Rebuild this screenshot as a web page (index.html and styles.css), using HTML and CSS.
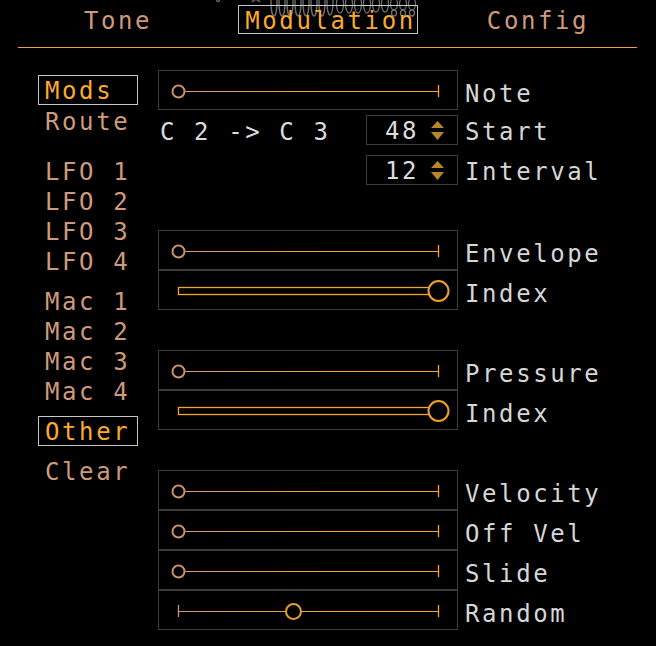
FILE: index.html
```html
<!DOCTYPE html>
<html>
<head>
<meta charset="utf-8">
<link rel="stylesheet" href="styles.css">
</head>
<body>
<div class="app">
  <svg class="logo" width="240" height="20" viewBox="0 0 240 20">
    <g fill="none" stroke="#6e6e6e" stroke-width="1.3">
      <circle cx="18" cy="0" r="1.5"/>
      <path d="M52 2 q4 -5 8 0"/>
      <ellipse cx="74" cy="2" rx="3" ry="14"/>
      <ellipse cx="82" cy="2" rx="3" ry="14"/>
      <ellipse cx="90" cy="2" rx="3" ry="14"/>
      <ellipse cx="98" cy="2" rx="3" ry="14"/>
      <ellipse cx="106" cy="2" rx="3" ry="14"/>
      <ellipse cx="114" cy="2" rx="3" ry="14"/>
      <ellipse cx="122" cy="2" rx="3" ry="14"/>
      <ellipse cx="130" cy="2" rx="3" ry="13"/>
      <ellipse cx="140" cy="4" rx="3.5" ry="9"/>
      <ellipse cx="149" cy="4" rx="3.5" ry="9"/>
      <ellipse cx="158" cy="4" rx="3.5" ry="9"/>
      <ellipse cx="167" cy="4" rx="3.5" ry="9"/>
      <ellipse cx="176" cy="4" rx="3.5" ry="8"/>
      <ellipse cx="185" cy="4" rx="3.5" ry="8"/>
      <ellipse cx="194" cy="4" rx="3.5" ry="6"/>
      <ellipse cx="194" cy="13" rx="2.5" ry="3"/>
      <ellipse cx="203" cy="4" rx="3.5" ry="6"/>
      <ellipse cx="203" cy="13" rx="2.5" ry="3"/>
      <ellipse cx="212" cy="4" rx="3.5" ry="6"/>
      <ellipse cx="212" cy="13" rx="2.5" ry="3"/>
    </g>
  </svg>

  <nav class="tabs">
    <div class="tab"><span class="tab-label">Tone</span></div>
    <div class="tab"><span class="tab-label tab-active">Modulation</span></div>
    <div class="tab"><span class="tab-label">Config</span></div>
  </nav>
  <div class="rule"></div>

  <div class="main">
    <div class="menu">
      <div class="item selected">Mods</div>
      <div class="item gap1">Route</div>
      <div class="item gap20">LFO 1</div>
      <div class="item">LFO 2</div>
      <div class="item">LFO 3</div>
      <div class="item">LFO 4</div>
      <div class="item gap10">Mac 1</div>
      <div class="item">Mac 2</div>
      <div class="item">Mac 3</div>
      <div class="item">Mac 4</div>
      <div class="item selected gap10">Other</div>
      <div class="item gap10">Clear</div>
    </div>

    <div class="panel">
      <div class="row">
        <div class="slider">
          <svg width="298" height="38" viewBox="0 0 298 38">
            <defs>
              <linearGradient id="g" x1="0" y1="0" x2="298" y2="0" gradientUnits="userSpaceOnUse">
                <stop offset="0" stop-color="#c8947a"/>
                <stop offset="0.45" stop-color="#f3a22e"/>
                <stop offset="1" stop-color="#fba526"/>
              </linearGradient>
            </defs>
            <line x1="25" y1="20.5" x2="280" y2="20.5" stroke="url(#g)" stroke-width="1.2"/>
            <line x1="279.5" y1="14" x2="279.5" y2="26" stroke="#f5a32a" stroke-width="1.3"/>
            <circle cx="19.5" cy="20.5" r="6" fill="#000" stroke="#c8906e" stroke-width="2"/>
          </svg>
        </div>
        <div class="label">Note</div>
      </div>

      <div class="row spin-row first-spin">
        <div class="range">C 2 -&gt; C 3</div>
        <div class="spin">
          <span class="num">48</span>
          <svg class="arrows" width="13" height="20" viewBox="0 0 13 20">
            <polygon points="6.5,0 13,7 0,7" fill="#b8862a"/>
            <polygon points="0,11 13,11 6.5,19" fill="#b8862a"/>
          </svg>
        </div>
        <div class="label spin-label">Start</div>
      </div>

      <div class="row spin-row second-spin">
        <div class="range"></div>
        <div class="spin">
          <span class="num">12</span>
          <svg class="arrows" width="13" height="20" viewBox="0 0 13 20">
            <polygon points="6.5,0 13,7 0,7" fill="#b8862a"/>
            <polygon points="0,11 13,11 6.5,19" fill="#b8862a"/>
          </svg>
        </div>
        <div class="label spin-label">Interval</div>
      </div>

      <div class="row group-env">
        <div class="slider">
          <svg width="298" height="38" viewBox="0 0 298 38">
            <line x1="25" y1="20.5" x2="280" y2="20.5" stroke="url(#g)" stroke-width="1.2"/>
            <line x1="279.5" y1="14" x2="279.5" y2="26" stroke="#f5a32a" stroke-width="1.3"/>
            <circle cx="19.5" cy="20.5" r="6" fill="#000" stroke="#c8906e" stroke-width="2"/>
          </svg>
        </div>
        <div class="label">Envelope</div>
      </div>
      <div class="row">
        <div class="slider">
          <svg width="298" height="38" viewBox="0 0 298 38">
            <rect x="19.5" y="16.5" width="258" height="7" fill="none" stroke="#f5a32a" stroke-width="1.3"/>
            <circle cx="279.5" cy="20" r="10" fill="#000" stroke="#f0a024" stroke-width="2"/>
          </svg>
        </div>
        <div class="label">Index</div>
      </div>

      <div class="row group">
        <div class="slider">
          <svg width="298" height="38" viewBox="0 0 298 38">
            <line x1="25" y1="20.5" x2="280" y2="20.5" stroke="url(#g)" stroke-width="1.2"/>
            <line x1="279.5" y1="14" x2="279.5" y2="26" stroke="#f5a32a" stroke-width="1.3"/>
            <circle cx="19.5" cy="20.5" r="6" fill="#000" stroke="#c8906e" stroke-width="2"/>
          </svg>
        </div>
        <div class="label">Pressure</div>
      </div>
      <div class="row">
        <div class="slider">
          <svg width="298" height="38" viewBox="0 0 298 38">
            <rect x="19.5" y="16.5" width="258" height="7" fill="none" stroke="#f5a32a" stroke-width="1.3"/>
            <circle cx="279.5" cy="20" r="10" fill="#000" stroke="#f0a024" stroke-width="2"/>
          </svg>
        </div>
        <div class="label">Index</div>
      </div>

      <div class="row group">
        <div class="slider">
          <svg width="298" height="38" viewBox="0 0 298 38">
            <line x1="25" y1="20.5" x2="280" y2="20.5" stroke="url(#g)" stroke-width="1.2"/>
            <line x1="279.5" y1="14" x2="279.5" y2="26" stroke="#f5a32a" stroke-width="1.3"/>
            <circle cx="19.5" cy="20.5" r="6" fill="#000" stroke="#c8906e" stroke-width="2"/>
          </svg>
        </div>
        <div class="label">Velocity</div>
      </div>
      <div class="row">
        <div class="slider">
          <svg width="298" height="38" viewBox="0 0 298 38">
            <line x1="25" y1="20.5" x2="280" y2="20.5" stroke="url(#g)" stroke-width="1.2"/>
            <line x1="279.5" y1="14" x2="279.5" y2="26" stroke="#f5a32a" stroke-width="1.3"/>
            <circle cx="19.5" cy="20.5" r="6" fill="#000" stroke="#c8906e" stroke-width="2"/>
          </svg>
        </div>
        <div class="label">Off Vel</div>
      </div>
      <div class="row">
        <div class="slider">
          <svg width="298" height="38" viewBox="0 0 298 38">
            <line x1="25" y1="20.5" x2="280" y2="20.5" stroke="url(#g)" stroke-width="1.2"/>
            <line x1="279.5" y1="14" x2="279.5" y2="26" stroke="#f5a32a" stroke-width="1.3"/>
            <circle cx="19.5" cy="20.5" r="6" fill="#000" stroke="#c8906e" stroke-width="2"/>
          </svg>
        </div>
        <div class="label">Slide</div>
      </div>
      <div class="row">
        <div class="slider">
          <svg width="298" height="38" viewBox="0 0 298 38">
            <line x1="19.5" y1="20.5" x2="280" y2="20.5" stroke="url(#g)" stroke-width="1.2"/>
            <line x1="19.5" y1="14" x2="19.5" y2="26" stroke="#c8947a" stroke-width="1.3"/>
            <line x1="279.5" y1="14" x2="279.5" y2="26" stroke="#f5a32a" stroke-width="1.3"/>
            <circle cx="134.5" cy="20.5" r="7.5" fill="#000" stroke="#e2a032" stroke-width="2"/>
          </svg>
        </div>
        <div class="label">Random</div>
      </div>
    </div>
  </div>
</div>
</body>
</html>
```

FILE: styles.css
```css
* { box-sizing: border-box; }

html, body {
  margin: 0;
  padding: 0;
  background: #000;
}

body {
  font-family: "DejaVu Sans Mono", monospace;
  font-size: 24px;
  letter-spacing: 2.6px;
  color: #d6d6d6;
  width: 656px;
  height: 646px;
  overflow: hidden;
}

.app {
  position: relative;
}

.logo {
  position: absolute;
  left: 200px;
  top: 0;
  z-index: 0;
}

.tabs {
  position: relative;
  z-index: 1;
  display: grid;
  grid-template-columns: 210px 210px 210px;
  padding-left: 13px;
  padding-top: 5px;
  height: 47px;
}

.tab {
  display: flex;
  justify-content: center;
  align-items: flex-start;
}

.tab-label {
  display: block;
  height: 29px;
  line-height: 23px;
  padding: 4px 0 0 0;
  border: 1px solid transparent;
  color: #cf9a7c;
}

.tab-active {
  color: #fbaa2e;
  border-color: #c8c8c8;
  padding: 4px 1px 0 6px;
}

.rule {
  height: 0;
  margin: 0 19px 0 18px;
  border-top: 1px solid #f3a22e;
}

.main {
  display: flex;
  padding-top: 22px;
  padding-left: 38px;
  gap: 20px;
}

.menu {
  width: 100px;
  padding-top: 5px;
  display: flex;
  flex-direction: column;
}

.item {
  height: 30px;
  line-height: 26px;
  padding: 2px 0 0 6px;
  border: 1px solid transparent;
  color: #cf9a7c;
  white-space: pre;
}

.item.selected {
  color: #fbaa2e;
  border-color: #c8c8c8;
}

.gap1 { margin-top: 1px; }
.gap10 { margin-top: 10px; }
.gap20 { margin-top: 20px; }

.panel {
  display: flex;
  flex-direction: column;
}

.row {
  display: flex;
  align-items: center;
}

.slider {
  width: 300px;
  height: 40px;
  border: 1px solid #3d3d3d;
  flex: none;
}

.slider svg {
  display: block;
}

.label {
  margin-left: 7px;
  line-height: 30px;
  padding-top: 8px;
  white-space: pre;
  color: #d6d6d6;
}

.spin-row {
  height: 30px;
}

.first-spin { margin-top: 5px; }
.second-spin { margin-top: 10px; }

.range {
  width: 208px;
  flex: none;
  line-height: 30px;
  padding-top: 4px;
  padding-left: 2px;
  white-space: pre;
  color: #dcdcdc;
}

.spin {
  width: 92px;
  height: 30px;
  flex: none;
  border: 1px solid #3d3d3d;
  display: flex;
  align-items: center;
  padding-left: 18px;
}

.num {
  line-height: 28px;
  padding-top: 2px;
  color: #dcdcdc;
}

.arrows {
  display: block;
  margin-left: 12px;
  margin-top: 1px;
}

.spin-label {
  padding-top: 3px;
}

.group-env { margin-top: 45px; }
.group { margin-top: 40px; }
```
